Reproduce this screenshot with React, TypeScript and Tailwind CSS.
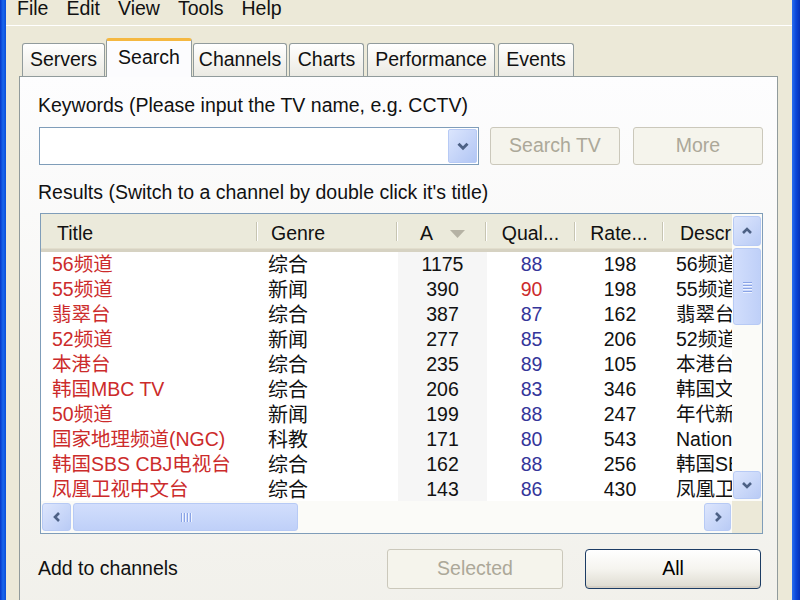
import React from 'react';

type Row = { title: string; genre: string; a: string; q: string; rate: string; descr: string };

const rows: Row[] = [
  { title: '56频道', genre: '综合', a: '1175', q: '88', rate: '198', descr: '56频道' },
  { title: '55频道', genre: '新闻', a: '390', q: '90', rate: '198', descr: '55频道' },
  { title: '翡翠台', genre: '综合', a: '387', q: '87', rate: '162', descr: '翡翠台' },
  { title: '52频道', genre: '新闻', a: '277', q: '85', rate: '206', descr: '52频道' },
  { title: '本港台', genre: '综合', a: '235', q: '89', rate: '105', descr: '本港台' },
  { title: '韩国MBC TV', genre: '综合', a: '206', q: '83', rate: '346', descr: '韩国文化' },
  { title: '50频道', genre: '新闻', a: '199', q: '88', rate: '247', descr: '年代新闻' },
  { title: '国家地理频道(NGC)', genre: '科教', a: '171', q: '80', rate: '543', descr: 'National' },
  { title: '韩国SBS CBJ电视台', genre: '综合', a: '162', q: '88', rate: '256', descr: '韩国SBS' },
  { title: '凤凰卫视中文台', genre: '综合', a: '143', q: '86', rate: '430', descr: '凤凰卫视' },
];

const tabs = [
  { label: 'Servers', cls: 'w-[83px] ml-0' },
  { label: 'Search', cls: 'w-[86px] ml-[1px]', active: true },
  { label: 'Channels', cls: 'w-[94px] ml-[1px]' },
  { label: 'Charts', cls: 'w-[75px] ml-[2px]' },
  { label: 'Performance', cls: 'w-[128px] ml-[3px]' },
  { label: 'Events', cls: 'w-[76px] ml-[3px]' },
];

const Chevron = ({ dir, size = 16 }: { dir: 'up' | 'down' | 'left' | 'right'; size?: number }) => {
  const pts = {
    up: '4,10 8,6 12,10',
    down: '4,6 8,10 12,6',
    left: '10,4 6,8 10,12',
    right: '6,4 10,8 6,12',
  }[dir];
  return (
    <svg width={size} height={size} viewBox="0 0 16 16">
      <polyline points={pts} fill="none" stroke="#4d6185" strokeWidth="2.6" />
    </svg>
  );
};

const ScrollBtn = ({ dir, className }: { dir: 'up' | 'down' | 'left' | 'right'; className: string }) => (
  <div className={`flex items-center justify-center rounded-[3px] border border-[#b7caf5] bg-gradient-to-br from-[#dde6fd] to-[#b9cbf5] ${className}`}>
    <Chevron dir={dir} />
  </div>
);

const XPButton = ({ label, disabled, className }: { label: string; disabled?: boolean; className: string }) =>
  disabled ? (
    <div className={`flex items-center justify-center rounded-[3px] border border-[#cbc8bb] bg-[#f5f4ec] text-[#aca899] ${className}`}>
      {label}
    </div>
  ) : (
    <div className={`flex items-center justify-center rounded-[4px] border border-[#1c3c64] bg-gradient-to-b from-white via-[#f5f4ef] to-[#dedbd0] text-black shadow-[inset_0_-2px_0_#d6d0c5] ${className}`}>
      {label}
    </div>
  );

const HeaderCell = ({ className, children }: { className: string; children: React.ReactNode }) => (
  <div className={`flex shrink-0 ${className}`}>
    <div className="flex flex-1 items-center min-w-0 pt-[4px]">{children}</div>
    <div className="my-[8px] w-[2px] border-l border-l-[#c7c5b2] border-r border-r-white" />
  </div>
);

export default function App() {
  return (
    <div className="flex h-[600px] w-[800px] overflow-hidden bg-[#ece9d8] font-['Liberation_Sans','Noto_Sans_CJK_SC',sans-serif] text-[19.5px] text-[#111]">
      <div className="w-[6px] shrink-0 bg-gradient-to-r from-[#0733c9] via-[#1a66ec] to-[#0b4ed9]" />

      <div className="flex flex-1 flex-col">
        {/* Menu bar */}
        <div className="flex h-[26px] shrink-0 gap-[18px] border-b border-white pl-[11px]">
          {['File', 'Edit', 'View', 'Tools', 'Help'].map((m) => (
            <span key={m} className="leading-[17px]">
              {m}
            </span>
          ))}
        </div>

        {/* Tabs */}
        <div className="flex h-[50px] shrink-0 items-end pl-[16px]">
          {tabs.map((t) =>
            t.active ? (
              <div
                key={t.label}
                className={`relative z-10 -mb-[1px] flex h-[39px] items-center justify-center rounded-t-[3px] border border-b-0 border-[#919b9c] border-t-[3px] border-t-[#f5b841] bg-[#fcfcfe] pb-[2px] ${t.cls}`}
              >
                {t.label}
              </div>
            ) : (
              <div
                key={t.label}
                className={`flex h-[33px] items-center justify-center rounded-t-[3px] border border-b-0 border-[#919b9c] bg-gradient-to-b from-white to-[#ebeae3] ${t.cls}`}
              >
                {t.label}
              </div>
            ),
          )}
        </div>

        {/* Tab page */}
        <div className="ml-[13px] mr-[14px] flex h-[560px] shrink-0 flex-col border border-[#919b9c] bg-gradient-to-b from-[#fdfdfe] to-[#f1f0ea] pl-[18px]">
          <div className="mt-[17px] leading-[22px]">Keywords (Please input the TV name, e.g. CCTV)</div>

          <div className="mt-[11px] flex h-[38px] shrink-0 items-center">
            <div className="ml-[1px] flex h-[38px] w-[440px] justify-end border border-[#7f9db9] bg-white p-[1px]">
              <div className="flex w-[29px] items-center justify-center rounded-[2px] border border-[#b7caf5] bg-gradient-to-br from-[#dbe5fd] to-[#b2c6f4]">
                <Chevron dir="down" size={18} />
              </div>
            </div>
            <XPButton label="Search TV" disabled className="ml-[11px] h-[38px] w-[130px]" />
            <XPButton label="More" disabled className="ml-[13px] h-[38px] w-[130px]" />
          </div>

          <div className="mt-[16px] leading-[22px]">Results (Switch to a channel by double click it's title)</div>

          {/* List view */}
          <div className="ml-[2px] mt-[10px] grid h-[321px] w-[723px] shrink-0 grid-cols-[1fr_30px] grid-rows-[1fr_32px] border border-[#7f9db9] bg-white">
            <div className="flex min-w-0 flex-col overflow-hidden">
              <div className="flex h-[38px] shrink-0 border-b-[3px] border-[#d6d2c2] bg-[#ebeadb] shadow-[inset_0_-1px_0_#e2decd]">
                <HeaderCell className="w-[217px] pl-[16px]">Title</HeaderCell>
                <HeaderCell className="w-[140px] pl-[13px]">Genre</HeaderCell>
                <HeaderCell className="w-[89px]">
                  <div className="flex w-full items-center justify-center gap-[17px] pl-[2px]">
                    <span>A</span>
                    <svg width="15" height="8" viewBox="0 0 15 8">
                      <polygon points="0,0 15,0 7.5,8" fill="#b5b2a4" />
                    </svg>
                  </div>
                </HeaderCell>
                <HeaderCell className="w-[89px] justify-center">
                  <span className="w-full text-center">Qual...</span>
                </HeaderCell>
                <HeaderCell className="w-[88px]">
                  <span className="w-full text-center">Rate...</span>
                </HeaderCell>
                <div className="flex flex-1 items-center whitespace-nowrap pl-[16px] pt-[4px]">Descr</div>
              </div>

              {rows.map((r) => (
                <div key={r.title} className="flex h-[25px] shrink-0 items-center whitespace-nowrap">
                  <div className="w-[217px] shrink-0 pl-[11px] text-[#cc2b2b]">{r.title}</div>
                  <div className="w-[140px] shrink-0 pl-[10px] text-[20px]">{r.genre}</div>
                  <div className="flex h-full w-[89px] shrink-0 items-center justify-center bg-[#f6f6f6]">{r.a}</div>
                  <div className={`w-[89px] shrink-0 text-center ${r.q === '90' ? 'text-[#cc2b2b]' : 'text-[#35359a]'}`}>{r.q}</div>
                  <div className="w-[88px] shrink-0 text-center">{r.rate}</div>
                  <div className="flex-1 overflow-hidden pl-[12px]">{r.descr}</div>
                </div>
              ))}
            </div>

            {/* Vertical scrollbar */}
            <div className="flex flex-col gap-[2px] bg-[#fbfbf8] px-[1px] py-[2px]">
              <ScrollBtn dir="up" className="h-[30px]" />
              <div className="flex h-[77px] flex-col items-center justify-center gap-[2px] rounded-[3px] border border-[#b7caf5] bg-gradient-to-r from-[#d2defc] to-[#bfd0f8]">
                {[0, 1, 2, 3].map((i) => (
                  <div key={i} className="h-[1px] w-[9px] bg-[#8aa4e6] shadow-[0_1px_0_#eef3ff]" />
                ))}
              </div>
              <div className="flex-1" />
              <ScrollBtn dir="down" className="h-[28px]" />
            </div>

            {/* Horizontal scrollbar */}
            <div className="flex gap-[2px] bg-[#fbfbf8] px-[1px] py-[2px]">
              <ScrollBtn dir="left" className="w-[29px]" />
              <div className="flex w-[225px] items-center justify-center gap-[2px] rounded-[3px] border border-[#b7caf5] bg-gradient-to-b from-[#d2defc] to-[#bfd0f8]">
                {[0, 1, 2, 3].map((i) => (
                  <div key={i} className="h-[9px] w-[1px] bg-[#8aa4e6] shadow-[1px_0_0_#eef3ff]" />
                ))}
              </div>
              <div className="flex-1" />
              <ScrollBtn dir="right" className="w-[27px]" />
            </div>
            <div className="bg-[#ece9d8]" />
          </div>

          {/* Bottom row */}
          <div className="mt-[15px] flex h-[40px] shrink-0 items-center pr-[16px]">
            <span className="flex-1">Add to channels</span>
            <XPButton label="Selected" disabled className="h-[40px] w-[176px]" />
            <XPButton label="All" className="ml-[22px] h-[40px] w-[176px]" />
          </div>
        </div>
      </div>

      <div className="w-[8px] shrink-0 bg-gradient-to-r from-[#2a6ef0] via-[#0b46d8] to-[#0631b8]" />
    </div>
  );
}
